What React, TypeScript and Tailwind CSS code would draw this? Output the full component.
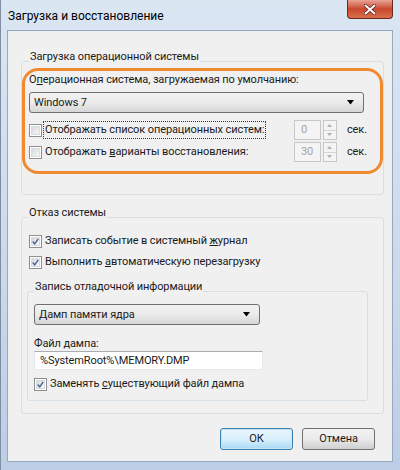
import React from "react";

const Checkbox: React.FC<{ checked?: boolean }> = ({ checked }) => (
  <span className="flex h-[13px] w-[13px] shrink-0 items-center justify-center border border-[#8e8f8f] bg-white p-px">
    <span className="flex h-full w-full items-center justify-center border border-[#d9dde2] bg-gradient-to-br from-[#d6d8db] to-[#f8f8f8]">
      {checked && (
        <svg width="9" height="9" viewBox="0 0 9 9">
          <path d="M1 4.5 L3.5 7.5 L8 1" fill="none" stroke="#4a5d95" strokeWidth="1.8" />
        </svg>
      )}
    </span>
  </span>
);

const Dropdown: React.FC<{ value: string; className?: string }> = ({ value, className }) => (
  <div
    className={
      "flex h-[21px] items-center justify-between rounded-[3px] border border-[#707070] bg-gradient-to-b from-[#f2f2f2] via-[#ebebeb] to-[#d6d6d6] pl-[4px] pr-[8px] " +
      (className ?? "")
    }
  >
    <span>{value}</span>
    <svg width="8" height="5" viewBox="0 0 8 5">
      <path d="M0 0 H7 L3.5 4.5 Z" fill="#000" />
    </svg>
  </div>
);

const Spinner: React.FC<{ value: string }> = ({ value }) => (
  <div className="flex h-[20px] shrink-0 items-stretch">
    <div className="flex w-[27px] items-center border border-[#c7c7c7] bg-[#f4f4f4] pl-[6px] text-[#a3a3a3]">{value}</div>
    <div className="ml-[2px] flex w-[14px] flex-col border border-[#c7c7c7] bg-[#f4f4f4]">
      <div className="flex flex-1 items-center justify-center border-b border-[#d6d6d6]">
        <svg width="5" height="3" viewBox="0 0 5 3">
          <path d="M0 3 L2.5 0 L5 3 Z" fill="#b0b0b0" />
        </svg>
      </div>
      <div className="flex flex-1 items-center justify-center">
        <svg width="5" height="3" viewBox="0 0 5 3">
          <path d="M0 0 L2.5 3 L5 0 Z" fill="#b0b0b0" />
        </svg>
      </div>
    </div>
    <span className="ml-[10px] flex items-center">сек.</span>
  </div>
);

const CheckRow: React.FC<{ checked?: boolean; children: React.ReactNode }> = ({ checked, children }) => (
  <div className="flex h-[16px] items-center gap-[3px]">
    <Checkbox checked={checked} />
    <span className="whitespace-nowrap">{children}</span>
  </div>
);

export default function App() {
  return (
    <div className="flex h-[470px] w-[400px] flex-col overflow-hidden border-l border-[#7f8ea3] bg-gradient-to-b from-[#dbe6f3] via-[#cddbec] to-[#bccee5] font-['Roboto',sans-serif] text-[11px] leading-4 tracking-[-0.1px] text-[#1a1a1a]">
      {/* title bar */}
      <div className="flex h-[30px] shrink-0 items-start justify-between">
        <span className="ml-[7px] mt-[8px] text-[12px] leading-4 tracking-normal text-black">Загрузка и восстановление</span>
        <div className="mr-[7px] flex h-[19px] w-[46px] items-center justify-center rounded-b-[4px] border border-t-0 border-[#6b2a22] bg-gradient-to-b from-[#e7a395] via-[#c9472f] to-[#d7704a]">
          <svg width="12" height="11" viewBox="0 0 12 11">
            <path d="M1.5 1.5 L10.5 9.5 M10.5 1.5 L1.5 9.5" stroke="#5a2018" strokeWidth="3.4" strokeLinecap="round" />
            <path d="M1.5 1.5 L10.5 9.5 M10.5 1.5 L1.5 9.5" stroke="#fff" strokeWidth="2" strokeLinecap="round" />
          </svg>
        </div>
      </div>

      {/* client area */}
      <div className="mb-[8px] ml-[6px] mr-[7px] flex flex-1 flex-col border border-[#98a9bf] bg-[#f0f0f0] pb-[11px]">
        {/* boot group */}
        <fieldset className="ml-[13px] mr-[8px] mt-[18px] rounded-[3px] border border-[#d5dfe5] pb-[20px]">
          <legend className="ml-[7px] px-[1px] pb-2">Загрузка операционной системы</legend>
          <div className="-mt-[5px] flex flex-col rounded-[16px] border-[3px] border-[#f08a30] pb-[9px] pl-[4px]">
            <span className="mt-[1px] whitespace-nowrap">
              О<u>п</u>ерационная система, загружаемая по умолчанию:
            </span>
            <Dropdown value="Windows 7" className="mt-[4px] w-[335px]" />
            <div className="mt-[7px] flex h-[20px] items-center justify-between pr-[13px]">
              <div className="flex items-center gap-[2px]">
                <Checkbox />
                <span className="whitespace-nowrap px-[1px] outline-1 outline-dotted outline-[#333]">
                  Отображать список операционных систем:
                </span>
              </div>
              <Spinner value="0" />
            </div>
            <div className="mt-[2px] flex h-[20px] items-center justify-between pr-[13px]">
              <div className="flex items-center gap-[3px]">
                <Checkbox />
                <span className="whitespace-nowrap">
                  Отображать <u>в</u>арианты восстановления:
                </span>
              </div>
              <Spinner value="30" />
            </div>
          </div>
        </fieldset>

        {/* failure group */}
        <fieldset className="ml-[13px] mr-[8px] mt-[10px] rounded-[3px] border border-[#d5dfe5] pb-[12px]">
          <legend className="ml-[6px] px-[1px] pb-2">Отказ системы</legend>
          <div className="ml-[7px] mt-[4px] flex flex-col gap-[5px]">
            <CheckRow checked>
              Записать событие в системный <u>ж</u>урнал
            </CheckRow>
            <CheckRow checked>
              Выполнить <u>а</u>втоматическую перезагрузку
            </CheckRow>
          </div>

          <fieldset className="ml-[5px] mr-[15px] mt-[9px] rounded-[3px] border border-[#d5dfe5] pb-[8px]">
            <legend className="ml-[6px] px-[1px] pb-2">Запись отладочной информации</legend>
            <div className="ml-[6px] flex flex-col">
              <Dropdown value="Дамп памяти ядра" className="mt-[1px] w-[226px]" />
              <span className="mt-[12px] leading-[14px]">Файл дампа:</span>
              <div className="flex h-[19px] w-[229px] items-center border border-[#e3e9ef] border-t-[#abadb3] bg-white pl-[5px]">
                %SystemRoot%\MEMORY.DMP
              </div>
              <div className="mt-[6px]">
                <CheckRow checked>
                  Заменять <u>с</u>уществующий файл дампа
                </CheckRow>
              </div>
            </div>
          </fieldset>
        </fieldset>

        {/* buttons */}
        <div className="mr-[17px] mt-auto flex justify-end gap-[9px]">
          <button className="h-[22px] w-[73px] rounded-[3px] border border-[#3c7fb1] bg-gradient-to-b from-[#eaf6fd] via-[#d9f0fc] to-[#a7d9f5] shadow-[inset_0_0_0_1px_#c4e5f6]">
            ОК
          </button>
          <button className="h-[22px] w-[73px] rounded-[3px] border border-[#707070] bg-gradient-to-b from-[#f2f2f2] via-[#ebebeb] to-[#cfcfcf]">
            Отмена
          </button>
        </div>
      </div>
    </div>
  );
}
